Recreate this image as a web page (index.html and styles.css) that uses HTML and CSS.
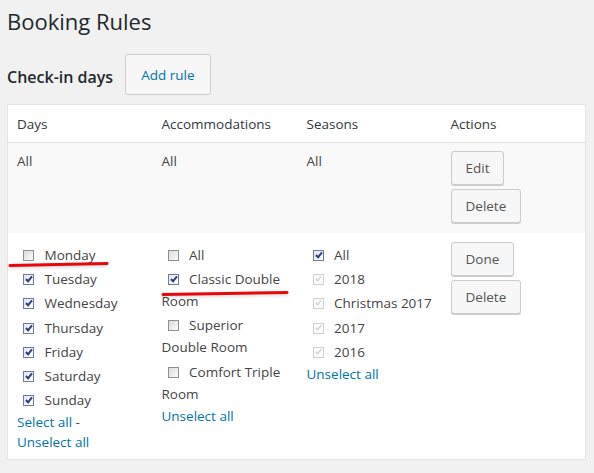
FILE: index.html
```html
<!DOCTYPE html>
<html lang="en">
<head>
  <meta charset="UTF-8" />
  <meta name="viewport" content="width=device-width, initial-scale=1.0"/>
  <title>Booking Rules</title>

  <link rel="stylesheet" href="styles.css">
</head>
<body>

  <div class="wrap">
    <h1 class="page-title">Booking Rules</h1>

    <div class="section-head">
      <h2>Check-in days</h2>
      <button class="button button-link">Add rule</button>
    </div>

    <table class="rules-table">
      <colgroup>
        <col class="col-days">
        <col class="col-accommodations">
        <col class="col-seasons">
        <col>
      </colgroup>
      <thead>
        <tr>
          <th>Days</th>
          <th>Accommodations</th>
          <th>Seasons</th>
          <th>Actions</th>
        </tr>
      </thead>
      <tbody>
        <tr class="row-view">
          <td>All</td>
          <td>All</td>
          <td>All</td>
          <td>
            <div class="actions">
              <button class="button">Edit</button>
              <button class="button">Delete</button>
            </div>
          </td>
        </tr>
        <tr class="row-edit">
          <td>
            <label class="option"><input type="checkbox"> Monday</label>
            <label class="option"><input type="checkbox" checked> Tuesday</label>
            <label class="option"><input type="checkbox" checked> Wednesday</label>
            <label class="option"><input type="checkbox" checked> Thursday</label>
            <label class="option"><input type="checkbox" checked> Friday</label>
            <label class="option"><input type="checkbox" checked> Saturday</label>
            <label class="option"><input type="checkbox" checked> Sunday</label>
            <div class="links"><a href="#">Select all</a> - <a href="#">Unselect all</a></div>
          </td>
          <td>
            <label class="option"><input type="checkbox"> All</label>
            <label class="option"><input type="checkbox" checked> Classic Double Room</label>
            <label class="option"><input type="checkbox"> Superior Double Room</label>
            <label class="option"><input type="checkbox"> Comfort Triple Room</label>
            <div class="links"><a href="#">Unselect all</a></div>
          </td>
          <td class="cell-seasons">
            <label class="option"><input type="checkbox" checked> All</label>
            <label class="option"><input type="checkbox" checked disabled> 2018</label>
            <label class="option"><input type="checkbox" checked disabled> Christmas 2017</label>
            <label class="option"><input type="checkbox" checked disabled> 2017</label>
            <label class="option"><input type="checkbox" checked disabled> 2016</label>
            <div class="links"><a href="#">Unselect all</a></div>
          </td>
          <td>
            <div class="actions">
              <button class="button">Done</button>
              <button class="button">Delete</button>
            </div>
          </td>
        </tr>
      </tbody>
    </table>

    <!-- red marks drawn over the screenshot -->
    <svg class="marks" width="594" height="473" viewBox="0 0 594 473">
      <g class="mark-shadow">
        <path d="M10 267 L107 265" />
        <path d="M163 296 L287 294" />
      </g>
      <g class="mark">
        <path d="M10 265.5 L107 263.5" />
        <path d="M163 294.5 L287 292.5" />
      </g>
    </svg>
  </div>

</body>
</html>
```

FILE: styles.css
```css
body {
  font-family: 'Open Sans', 'Noto Sans', sans-serif;
  background-color: #f1f1f1;
  color: #444;
  margin: 0;
  padding: 0;
}

.wrap {
  position: relative;
  padding: 0 8px 0 7px;
}

.page-title {
  font-size: 22px;
  font-weight: 400;
  line-height: 30px;
  color: #23282d;
  margin: 0;
  padding: 6px 0 0 0;
}

.section-head {
  display: flex;
  align-items: center;
  gap: 12px;
  margin: 18px 0 9px 0;
}

.section-head h2 {
  font-size: 16px;
  font-weight: 600;
  color: #23282d;
  margin: 4px 0 0 0;
}

.button {
  font-family: inherit;
  font-size: 13.5px;
  color: #555;
  background-color: #f7f7f7;
  border: 1px solid #ccc;
  border-radius: 3px;
  box-shadow: 0 1px 0 #ccc;
  padding: 0 14px;
  height: 34px;
  cursor: pointer;
}

.button-link {
  color: #0073aa;
  height: 41px;
  padding: 0 15px;
  font-size: 13.5px;
  box-shadow: none;
}

.rules-table {
  width: 100%;
  table-layout: fixed;
  border-collapse: collapse;
  background-color: #fff;
  border: 1px solid #e5e5e5;
  box-shadow: 0 1px 1px rgba(0, 0, 0, 0.04);
  font-size: 13.5px;
}

.col-days,
.col-accommodations {
  width: 145px;
}

.col-seasons {
  width: 144px;
}

.rules-table th {
  text-align: left;
  font-weight: 400;
  color: #32373c;
  line-height: 20px;
  padding: 9px 4px 8px 9px;
  border-bottom: 1px solid #e1e1e1;
}

.rules-table td {
  vertical-align: top;
  line-height: 20px;
  padding: 8px 10px 10px 9px;
}

.rules-table td.cell-seasons {
  padding-right: 3px;
}

.row-view td {
  background-color: #f9f9f9;
}

.row-edit td {
  padding-top: 10px;
  padding-bottom: 7px;
}

.row-edit td:last-child {
  padding-top: 9px;
}

.actions {
  display: flex;
  flex-direction: column;
  align-items: flex-start;
  gap: 4px;
}

.option {
  display: block;
  line-height: 22px;
  padding: 1px 0 1.2px 0;
}

.option input {
  -webkit-appearance: none;
  appearance: none;
  position: relative;
  box-sizing: border-box;
  width: 11px;
  height: 11px;
  margin: 0 7px 0 6px;
  vertical-align: -1px;
  border: 1px solid #8f8f8f;
  background: linear-gradient(135deg, #dcdcdc, #fbfbfb);
}

.option input:checked {
  border-color: #6f7b9e;
  background: linear-gradient(135deg, #e4e6ee, #fff);
}

.option input:checked::after {
  content: "";
  position: absolute;
  left: 3px;
  top: 0px;
  width: 2px;
  height: 5px;
  border-right: 2px solid #2f3d88;
  border-bottom: 2px solid #2f3d88;
  transform: rotate(40deg);
}

.option input:disabled {
  border-color: #d0d0d0;
  background: #fafafa;
}

.option input:disabled::after {
  border-right-color: #c8c8c8;
  border-bottom-color: #c8c8c8;
  border-right-width: 1px;
  border-bottom-width: 1px;
}

.links {
  line-height: 20px;
}

.links a {
  color: #0073aa;
  text-decoration: none;
  white-space: nowrap;
}

.marks {
  position: absolute;
  left: 0;
  top: 0;
  pointer-events: none;
}

.marks path {
  fill: none;
  stroke-linecap: round;
}

.mark path {
  stroke: #e8070c;
  stroke-width: 3;
}

.mark-shadow path {
  stroke: rgba(0, 0, 0, 0.12);
  stroke-width: 4;
  filter: blur(1.5px);
}
```
